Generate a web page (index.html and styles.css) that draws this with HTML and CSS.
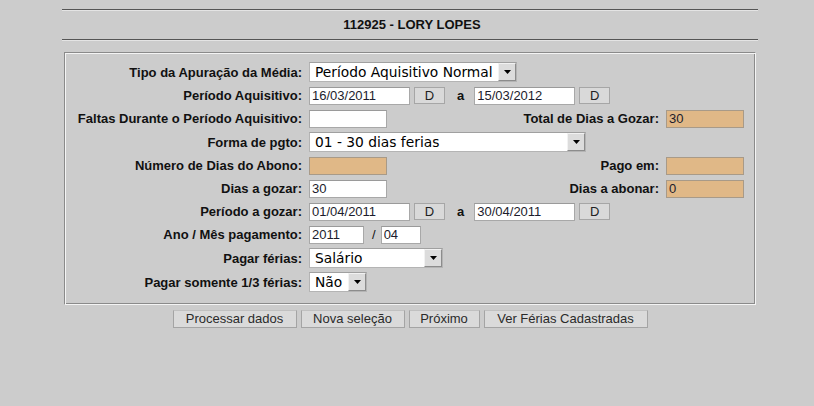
FILE: index.html
```html
<!DOCTYPE html>
<html lang="pt-BR">
<head>
<meta charset="utf-8">
<title>Férias</title>
<link rel="stylesheet" href="styles.css">
</head>
<body>
<div class="page">
  <div class="header">
    <div class="title">112925 - LORY LOPES</div>
  </div>

  <div class="box">
    <div class="form">
      <div class="lbl">Tipo da Apuração da Média:</div>
      <div class="fld wide">
        <span class="sel w-tipo"><select><option>Período Aquisitivo Normal</option></select><span class="arrow"><svg width="7" height="4" viewBox="0 0 7 4"><polygon points="0,0 7,0 3.5,4" fill="#000"/></svg></span></span>
      </div>

      <div class="lbl">Período Aquisitivo:</div>
      <div class="fld wide">
        <input class="txt w-date" value="16/03/2011"><button class="btn-d">D</button><span class="a">a</span><input class="txt w-date" value="15/03/2012"><button class="btn-d">D</button>
      </div>

      <div class="lbl">Faltas Durante o Período Aquisitivo:</div>
      <div class="fld"><input class="txt w-sm" value=""></div>
      <div class="lbl">Total de Dias a Gozar:</div>
      <div class="fld"><input class="txt w-sm tan" value="30"></div>

      <div class="lbl">Forma de pgto:</div>
      <div class="fld wide">
        <span class="sel w-forma"><select><option>01 - 30 dias ferias</option></select><span class="arrow"><svg width="7" height="4" viewBox="0 0 7 4"><polygon points="0,0 7,0 3.5,4" fill="#000"/></svg></span></span>
      </div>

      <div class="lbl">Número de Dias do Abono:</div>
      <div class="fld"><input class="txt w-sm tan" value=""></div>
      <div class="lbl">Pago em:</div>
      <div class="fld"><input class="txt w-sm tan" value=""></div>

      <div class="lbl">Dias a gozar:</div>
      <div class="fld"><input class="txt w-sm" value="30"></div>
      <div class="lbl">Dias a abonar:</div>
      <div class="fld"><input class="txt w-sm tan" value="0"></div>

      <div class="lbl">Período a gozar:</div>
      <div class="fld wide">
        <input class="txt w-date" value="01/04/2011"><button class="btn-d">D</button><span class="a">a</span><input class="txt w-date" value="30/04/2011"><button class="btn-d">D</button>
      </div>

      <div class="lbl">Ano / Mês pagamento:</div>
      <div class="fld wide">
        <input class="txt w-ano" value="2011"><span class="slash">/</span><input class="txt w-mes" value="04">
      </div>

      <div class="lbl">Pagar férias:</div>
      <div class="fld wide">
        <span class="sel w-pagar"><select><option>Salário</option></select><span class="arrow"><svg width="7" height="4" viewBox="0 0 7 4"><polygon points="0,0 7,0 3.5,4" fill="#000"/></svg></span></span>
      </div>

      <div class="lbl">Pagar somente 1/3 férias:</div>
      <div class="fld wide">
        <span class="sel w-nao"><select><option>Não</option></select><span class="arrow"><svg width="7" height="4" viewBox="0 0 7 4"><polygon points="0,0 7,0 3.5,4" fill="#000"/></svg></span></span>
      </div>
    </div>
  </div>

  <div class="actions">
    <button class="btn b-proc">Processar dados</button>
    <button class="btn b-nova">Nova seleção</button>
    <button class="btn b-prox">Próximo</button>
    <button class="btn b-ver">Ver Férias Cadastradas</button>
  </div>
</div>
</body>
</html>
```

FILE: styles.css
```css
html, body {
  margin: 0;
  padding: 0;
  background: #cccccc;
  font-family: "Liberation Sans", Arial, sans-serif;
  font-size: 13px;
  color: #111;
}

.page {
  width: 696px;
  margin-left: 62px;
  padding-top: 9px;
}

.header {
  height: 29px;
  border-top: 1px solid #555;
  border-bottom: 1px solid #555;
  box-shadow: 0 1px 0 #e4e4e4, inset 0 1px 0 #e4e4e4;
  display: flex;
  align-items: center;
  justify-content: center;
}

.title {
  font-weight: bold;
  font-size: 13px;
  color: #111;
  margin-left: 4px;
}

.box {
  margin: 12px 2px 0 2px;
  border: 1px solid;
  border-color: #8a8a8a #f4f4f4 #f4f4f4 #8a8a8a;
  box-shadow: inset 1px 1px 0 #f4f4f4, inset -1px -1px 0 #8a8a8a;
  padding: 7px 1px 10px 1px;
}

.form {
  display: grid;
  grid-template-columns: 236px 200px 143px 1fr;
  grid-template-rows: 24px 23px 23px 24px 23px 23px 23px 23px 24px 24px;
  column-gap: 7px;
  align-items: center;
}

.lbl {
  font-weight: bold;
  text-align: right;
  white-space: nowrap;
  color: #111;
}

.fld {
  display: flex;
  align-items: center;
  white-space: nowrap;
}

.fld.wide {
  grid-column: 2 / -1;
}

.txt {
  box-sizing: border-box;
  height: 18px;
  margin: 0;
  padding: 0 2px;
  border: 1px solid #a8a8a8;
  border-top-color: #9a9a9a;
  background: #fff;
  font-family: "Liberation Sans", Arial, sans-serif;
  font-size: 13px;
  color: #1c1c2c;
  outline: none;
}

.txt.tan {
  background: #e0b887;
  border-color: #a89a88;
}

.w-date { width: 101px; }
.w-sm { width: 78px; }
.w-ano { width: 55px; }
.w-mes { width: 40px; }

.btn-d {
  box-sizing: border-box;
  width: 31px;
  height: 17px;
  margin: 0 0 0 4px;
  padding: 0;
  background: #d9d9d9;
  border: 1px solid #a6a6a6;
  font-family: "Liberation Sans", Arial, sans-serif;
  font-size: 13px;
  color: #222;
}

.a {
  font-weight: bold;
  margin: 0 10px 0 12px;
}

.slash {
  margin: 0 5px 0 8px;
  font-size: 13px;
}

.sel {
  position: relative;
  display: inline-block;
  height: 20px;
}

.sel select {
  box-sizing: border-box;
  -webkit-appearance: none;
  appearance: none;
  width: 100%;
  height: 20px;
  margin: 0;
  padding: 0 20px 0 5px;
  background: #fff;
  border: 1px solid #b4b4b4;
  border-top-color: #a0a0a0;
  border-radius: 0;
  font-family: "DejaVu Sans", sans-serif;
  font-size: 13.8px;
  color: #000;
  outline: none;
}

.sel .arrow {
  position: absolute;
  top: 1px;
  right: 1px;
  bottom: 1px;
  width: 18px;
  box-sizing: border-box;
  background: #dcdcdc;
  border-top: 1px solid #f2f2f2;
  border-left: 1px solid #f2f2f2;
  border-right: 1px solid #8c8c8c;
  border-bottom: 1px solid #8c8c8c;
  display: flex;
  align-items: center;
  justify-content: center;
}

.w-tipo { width: 208px; }
.w-forma { width: 277px; }
.w-pagar { width: 134px; }
.w-nao { width: 58px; }

.actions {
  display: flex;
  justify-content: center;
  gap: 4px;
  margin-top: 5px;
}

.btn {
  box-sizing: border-box;
  height: 18px;
  margin: 0;
  padding: 0;
  background: #dadada;
  border: 1px solid #a4a4a4;
  border-top-color: #c0c0c0;
  font-family: "Liberation Sans", Arial, sans-serif;
  font-size: 13px;
  color: #2a2a2a;
  line-height: 16px;
  white-space: nowrap;
}

.b-proc { width: 124px; }
.b-nova { width: 104px; }
.b-prox { width: 71px; }
.b-ver { width: 164px; }
```
